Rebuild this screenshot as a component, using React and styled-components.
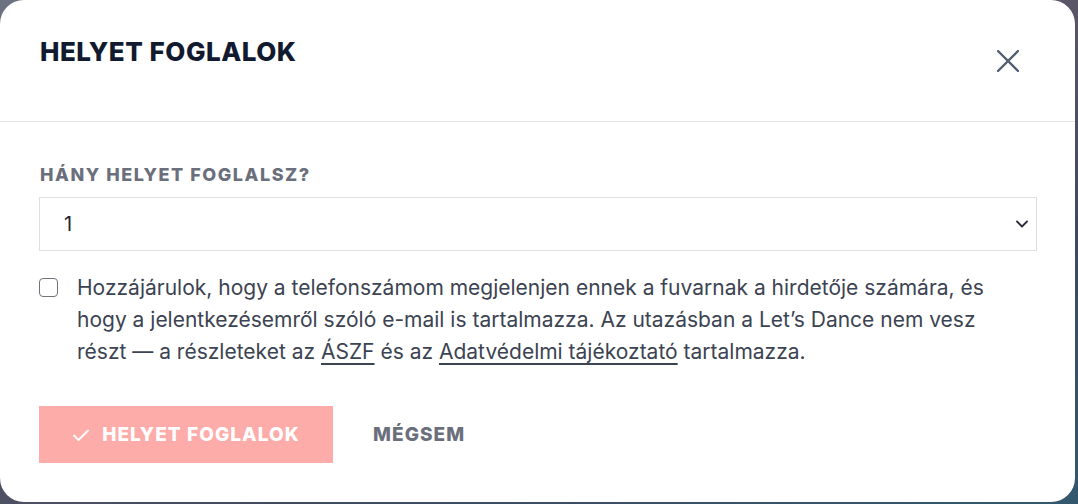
import React, { useState } from "react";
import styled, { createGlobalStyle } from "styled-components";

const GlobalStyle = createGlobalStyle`
  html, body {
    margin: 0;
    padding: 0;
  }
  body {
    width: 1078px;
    height: 504px;
    overflow: hidden;
    font-family: Inter, "Noto Sans", sans-serif;
    background: linear-gradient(160deg, #6c7282 0%, #5a5566 45%, #3e4a5e 70%, #33586d 100%);
  }
`;

const Modal = styled.div`
  width: 1075px;
  height: 502px;
  box-sizing: border-box;
  background: #ffffff;
  border-radius: 24px;
  display: flex;
  flex-direction: column;
`;

const Header = styled.div`
  height: 122px;
  box-sizing: border-box;
  border-bottom: 1px solid #e4e4e7;
  display: flex;
  justify-content: space-between;
  align-items: flex-start;
  padding: 36px 45px 0 40px;
`;

const Title = styled.h2`
  margin: 0;
  font-size: 26px;
  line-height: 1.2;
  font-weight: 800;
  letter-spacing: 0.02em;
  color: #111a2e;
`;

const CloseButton = styled.button`
  width: 44px;
  height: 44px;
  margin-top: 3px;
  border: none;
  background: transparent;
  padding: 0;
  display: flex;
  align-items: center;
  justify-content: center;
  cursor: pointer;
`;

const Body = styled.div`
  padding: 43px 38px 39px 39px;
  display: flex;
  flex-direction: column;
`;

const Label = styled.label`
  font-size: 18px;
  line-height: 20px;
  font-weight: 800;
  letter-spacing: 0.085em;
  color: #6b6f7b;
  margin: 0 0 12px 1px;
`;

const SelectWrap = styled.div`
  position: relative;
  height: 54px;
`;

const Select = styled.select`
  appearance: none;
  width: 100%;
  height: 100%;
  box-sizing: border-box;
  border: 1px solid #dcdfe3;
  border-radius: 0;
  background: #fff;
  padding: 0 24px;
  font-family: Inter, "Noto Sans", sans-serif;
  font-size: 20px;
  color: #1f2433;
  outline: none;
`;

const Chevron = styled.svg`
  position: absolute;
  right: 8px;
  top: 50%;
  transform: translateY(-50%);
  pointer-events: none;
`;

const ConsentRow = styled.label`
  display: flex;
  align-items: flex-start;
  gap: 19px;
  margin-top: 21px;
  cursor: pointer;
`;

const Box = styled.span`
  flex: none;
  width: 19px;
  height: 19px;
  box-sizing: border-box;
  border: 1.5px solid #6f747c;
  border-radius: 4px;
  margin-top: 6px;
  background: ${(p) => (p.checked ? "#ef6f6c" : "#fff")};
`;

const ConsentText = styled.p`
  margin: 0;
  max-width: 930px;
  font-size: 21px;
  line-height: 32px;
  color: #3c4352;
`;

const Link = styled.a`
  color: inherit;
  text-decoration: underline;
  text-underline-offset: 4px;
  text-decoration-thickness: 1.5px;
`;

const Actions = styled.div`
  display: flex;
  align-items: center;
  gap: 40px;
  margin-top: 38px;
`;

const PrimaryButton = styled.button`
  width: 294px;
  height: 57px;
  border: none;
  background: #fdaca9;
  color: #fff;
  font-family: Inter, "Noto Sans", sans-serif;
  font-size: 19px;
  font-weight: 800;
  letter-spacing: 0.056em;
  display: flex;
  align-items: center;
  justify-content: center;
  gap: 12px;
  cursor: not-allowed;
`;

const GhostButton = styled.button`
  border: none;
  background: transparent;
  padding: 0;
  color: #6b6f7b;
  font-family: Inter, "Noto Sans", sans-serif;
  font-size: 19px;
  font-weight: 800;
  letter-spacing: 0.056em;
  cursor: pointer;
`;

export default function App() {
  const [checked, setChecked] = useState(false);
  return (
    <>
      <GlobalStyle />
      <Modal>
        <Header>
          <Title>HELYET FOGLALOK</Title>
          <CloseButton aria-label="Bezárás">
            <svg width="22" height="22" viewBox="0 0 22 22">
              <path
                d="M1 1L21 21M21 1L1 21"
                stroke="#4f5d70"
                strokeWidth="2.3"
                strokeLinecap="round"
              />
            </svg>
          </CloseButton>
        </Header>
        <Body>
          <Label>HÁNY HELYET FOGLALSZ?</Label>
          <SelectWrap>
            <Select defaultValue="1">
              <option value="1">1</option>
              <option value="2">2</option>
              <option value="3">3</option>
              <option value="4">4</option>
            </Select>
            <Chevron width="14" height="14" viewBox="0 0 14 14">
              <path
                d="M2 4.5L7 9.5L12 4.5"
                fill="none"
                stroke="#2a2d3a"
                strokeWidth="1.8"
                strokeLinecap="round"
                strokeLinejoin="round"
              />
            </Chevron>
          </SelectWrap>
          <ConsentRow onClick={() => setChecked(!checked)}>
            <Box checked={checked} />
            <ConsentText>
              Hozzájárulok, hogy a telefonszámom megjelenjen ennek a fuvarnak a
              hirdetője számára, és hogy a jelentkezésemről szóló e-mail is
              tartalmazza. Az utazásban a Let’s Dance nem vesz részt — a
              részleteket az <Link href="#">ÁSZF</Link> és az{" "}
              <Link href="#">Adatvédelmi tájékoztató</Link> tartalmazza.
            </ConsentText>
          </ConsentRow>
          <Actions>
            <PrimaryButton>
              <svg width="18" height="18" viewBox="0 0 18 18">
                <path
                  d="M2 9.5L6.5 14L16 4.5"
                  fill="none"
                  stroke="#fff"
                  strokeWidth="1.8"
                  strokeLinecap="round"
                  strokeLinejoin="round"
                />
              </svg>
              HELYET FOGLALOK
            </PrimaryButton>
            <GhostButton>MÉGSEM</GhostButton>
          </Actions>
        </Body>
      </Modal>
    </>
  );
}
